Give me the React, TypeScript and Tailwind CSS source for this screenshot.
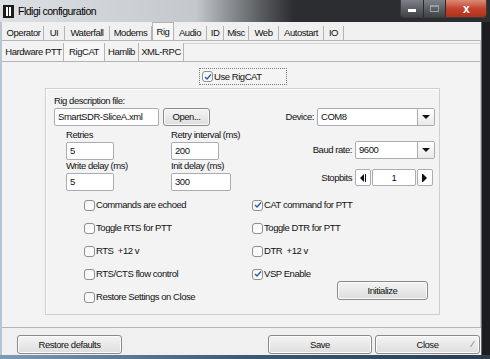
import { FC } from "react";

const topTabs = [
  { label: "Operator", w: 40 },
  { label: "UI", w: 21 },
  { label: "Waterfall", w: 45 },
  { label: "Modems", w: 42 },
  { label: "Rig", w: 22, active: true },
  { label: "Audio", w: 33 },
  { label: "ID", w: 17 },
  { label: "Misc", w: 25 },
  { label: "Web", w: 30 },
  { label: "Autostart", w: 45 },
  { label: "IO", w: 20 },
];

const subTabs = [
  { label: "Hardware PTT", w: 60 },
  { label: "RigCAT", w: 41, active: true },
  { label: "Hamlib", w: 34 },
  { label: "XML-RPC", w: 45 },
];

const Check: FC<{ label: string; checked?: boolean }> = ({ label, checked }) => (
  <div className="flex items-center h-[14px] whitespace-pre">
    <span className="w-[11px] h-[11px] rounded-[3px] border border-[#8f8f8f] bg-gradient-to-br from-[#f4f4f4] to-white flex items-center justify-center mr-[1px]">
      {checked && (
        <svg width="8" height="8" viewBox="0 0 8 8">
          <path d="M1 4 L3 6 L7 1.5" stroke="#2a5da8" strokeWidth="1.4" fill="none" />
        </svg>
      )}
    </span>
    <span>{label}</span>
  </div>
);

const Field: FC<{ value: string; w: number }> = ({ value, w }) => (
  <div
    className="h-[18px] bg-white border border-[#a9acb2] rounded-[2px] px-[3px] flex items-center whitespace-nowrap"
    style={{ width: w }}
  >
    {value}
  </div>
);

const Btn: FC<{ label: string; w: number; h?: number; children?: React.ReactNode }> = ({ label, w, h = 19, children }) => (
  <div
    className="relative border border-[#8a8a8a] rounded-[3px] bg-gradient-to-b from-[#f4f4f4] to-[#dedede] flex items-center justify-center shadow-[inset_0_0_0_1px_#fbfbfb]"
    style={{ width: w, height: h }}
  >
    {label}
    {children}
  </div>
);

const Arrow: FC<{ dir: "down" | "left" | "right" }> = ({ dir }) => (
  <svg width="10" height="8" viewBox="0 0 10 8">
    {dir === "down" && <path d="M1 2 H9 L5 6 Z" fill="#111" />}
    {dir === "left" && <path d="M6 0 V8 L2 4 Z M7 0 H8 V8 H7 Z" fill="#111" />}
    {dir === "right" && <path d="M3 0 V8 L7 4 Z M2 0 H3 V8 H2 Z" fill="#111" />}
  </svg>
);

const Combo: FC<{ value: string; w: number }> = ({ value, w }) => (
  <div className="flex h-[18px] bg-white border border-[#a9acb2] rounded-[2px]" style={{ width: w }}>
    <div className="flex-1 flex items-center px-[3px]">{value}</div>
    <div className="w-[17px] border-l border-[#a9acb2] flex items-center justify-center bg-gradient-to-b from-white to-[#e9e9e9]">
      <Arrow dir="down" />
    </div>
  </div>
);

const App: FC = () => {
  return (
    <div className="w-[490px] h-[359px] overflow-hidden bg-[#1f2226] flex flex-col text-[9.5px] tracking-[-0.45px] text-[#111] font-['Liberation_Sans',sans-serif] leading-[12px]">
      {/* title bar */}
      <div className="h-[22px] flex items-center bg-gradient-to-r from-[#dde1e5] via-[#c4c8cc] via-40% to-[#2b2d30] to-60% relative">
        <div className="ml-[3px] w-[11px] h-[13px] bg-[#1c1c1c] flex justify-around px-[2px] py-[2px]">
          <span className="w-[2px] bg-white" />
          <span className="w-[2px] bg-white" />
        </div>
        <span className="ml-[4px] text-[10.5px] tracking-[-0.5px] text-black">Fldigi configuration</span>
        <div className="ml-auto mr-[3px] self-start flex h-[18px] rounded-b-[4px] overflow-hidden border border-t-0 border-[#3c3c3c]">
          <div className="w-[23px] bg-gradient-to-b from-[#7d8288] to-[#3f4348] flex items-center justify-center border-r border-[#2a2a2a]">
            <span className="w-[8px] h-[3px] bg-white mt-[4px]" />
          </div>
          <div className="w-[22px] bg-gradient-to-b from-[#7d8288] to-[#3f4348] flex items-center justify-center border-r border-[#2a2a2a]">
            <span className="w-[9px] h-[7px] border border-[#9aa0a6] border-t-2" />
          </div>
          <div className="w-[40px] bg-gradient-to-b from-[#d98a77] via-[#c4432c] to-[#b0301b] flex items-center justify-center text-white font-bold text-[12px]">
            x
          </div>
        </div>
      </div>

      <div className="flex flex-1">
        <div className="w-[2px] bg-[#b7c5d3]" />
        <div className="w-[480px] bg-[#f0f0f0] flex flex-col border-r border-[#6b6b6b]">
          {/* top tabs */}
          <div className="h-[18px] flex items-end pl-[2px]">
            {topTabs.map((t) => (
              <div
                key={t.label}
                className={
                  t.active
                    ? "h-[18px] bg-[#f7f7f7] border-x border-t border-[#b4b4b4] flex items-center justify-center"
                    : "h-[14px] border-r border-[#b4b4b4] flex items-center justify-center"
                }
                style={{ width: t.w }}
              >
                {t.label}
              </div>
            ))}
          </div>
          <div className="flex-1 border-t border-[#b4b4b4] border-r border-r-[#c8c8c8] flex flex-col bg-[#f3f3f3]">
            {/* sub tabs */}
            <div className="h-[20px] flex items-stretch pl-[2px] pt-[2px]">
              {subTabs.map((t) => (
                <div
                  key={t.label}
                  className={
                    t.active
                      ? "bg-[#f7f7f7] border-r border-[#b4b4b4] flex items-center justify-center whitespace-nowrap"
                      : "border-r border-[#b4b4b4] flex items-center justify-center whitespace-nowrap"
                  }
                  style={{ width: t.w }}
                >
                  {t.label}
                </div>
              ))}
              <div className="flex-1 border-t border-[#d4d4d4]" />
            </div>
            <div className="flex-1 border-t border-[#b4b4b4] flex flex-col">
              {/* use rigcat */}
              <div className="flex justify-center pt-[6px] pl-[4px]">
                <div className="w-[88px] h-[17px] border border-dotted border-[#777] bg-[#f4f4f4] flex items-center pl-[2px]">
                  <Check label="Use RigCAT" checked />
                </div>
              </div>

              {/* group box */}
              <div className="ml-[43px] mt-[3px] w-[395px] h-[227px] border border-[#cfcfcf] shadow-[inset_1px_1px_0_#ffffff] flex flex-col pl-[8px] pr-[4px] pt-[6px]">
                <div className="flex items-end">
                  <div className="flex flex-col">
                    <span className="mb-[1px]">Rig description file:</span>
                    <div className="flex gap-[4px]">
                      <Field value="SmartSDR-SliceA.xml" w={105} />
                      <Btn label="Open..." w={47} h={18} />
                    </div>
                  </div>
                  <div className="ml-auto flex items-center gap-[3px]">
                    <span>Device:</span>
                    <Combo value="COM8" w={118} />
                  </div>
                </div>

                <div className="flex items-start mt-[3px]">
                  <div className="ml-[12px] flex flex-col w-[105px]">
                    <span className="mb-[1px]">Retries</span>
                    <Field value="5" w={48} />
                  </div>
                  <div className="flex flex-col">
                    <span className="mb-[1px]">Retry interval (ms)</span>
                    <Field value="200" w={48} />
                  </div>
                  <div className="ml-auto mt-[12px] flex items-center gap-[3px]">
                    <span>Baud rate:</span>
                    <Combo value="9600" w={80} />
                  </div>
                </div>

                <div className="flex items-start">
                  <div className="ml-[12px] flex flex-col w-[105px]">
                    <span className="mb-[1px]">Write delay (ms)</span>
                    <Field value="5" w={48} />
                  </div>
                  <div className="flex flex-col">
                    <span className="mb-[1px]">Init delay (ms)</span>
                    <Field value="300" w={60} />
                  </div>
                  <div className="ml-auto mr-[2px] mt-[9px] flex items-center gap-[3px]">
                    <span>Stopbits</span>
                    <div className="flex h-[17px] gap-[1px]">
                      <div className="w-[16px] bg-white border border-[#a9acb2] rounded-[2px] flex items-center justify-center">
                        <Arrow dir="left" />
                      </div>
                      <div className="w-[44px] bg-white border border-[#a9acb2] rounded-[2px] flex items-center justify-center">
                        1
                      </div>
                      <div className="w-[16px] bg-white border border-[#a9acb2] rounded-[2px] flex items-center justify-center">
                        <Arrow dir="right" />
                      </div>
                    </div>
                  </div>
                </div>

                <div className="flex mt-[7px]">
                  <div className="ml-[30px] w-[168px] flex flex-col gap-[9px]">
                    <Check label="Commands are echoed" />
                    <Check label="Toggle RTS for PTT" />
                    <Check label="RTS  +12 v" />
                    <Check label="RTS/CTS flow control" />
                    <Check label="Restore Settings on Close" />
                  </div>
                  <div className="flex flex-col gap-[9px]">
                    <Check label="CAT command for PTT" checked />
                    <Check label="Toggle DTR for PTT" />
                    <Check label="DTR  +12 v" />
                    <Check label="VSP Enable" checked />
                    <div className="ml-[85px] -mt-[9px]">
                      <Btn label="Initialize" w={91} />
                    </div>
                  </div>
                </div>
              </div>
            </div>
          </div>
          {/* bottom */}
          <div className="h-[28px] border-t border-[#b4b4b4] flex items-start pt-[7px] pl-[15px] pr-[1px] bg-[#f0f0f0]">
            <Btn label="Restore defaults" w={105} />
            <div className="ml-auto flex gap-[3px]">
              <Btn label="Save" w={104} />
              <Btn label="Close" w={105}>
                <span className="absolute right-[6px] bottom-[3px] text-[9px] text-[#555]">⁄</span>
              </Btn>
            </div>
          </div>
        </div>
        <div className="flex-1 bg-[#1b1d20]" />
      </div>
      <div className="h-[4px] bg-gradient-to-r from-[#7d9bb5] via-[#3c5a73] to-[#2b3d4d]" />
    </div>
  );
};

export default App;
